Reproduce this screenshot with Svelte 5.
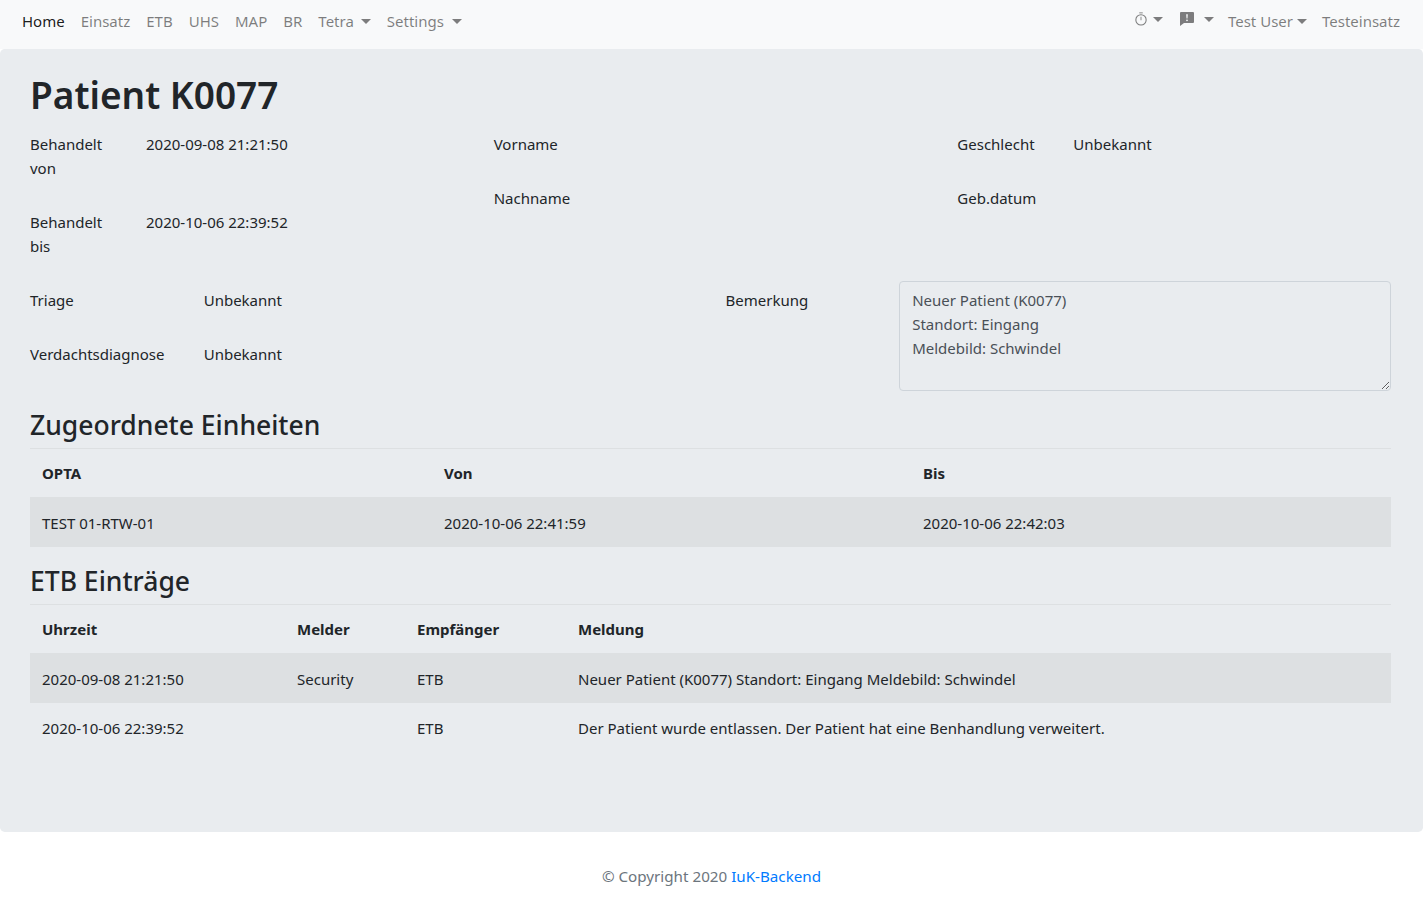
<script>
	const units = [{ opta: 'TEST 01-RTW-01', von: '2020-10-06 22:41:59', bis: '2020-10-06 22:42:03' }];
	const entries = [
		{
			time: '2020-09-08 21:21:50',
			melder: 'Security',
			to: 'ETB',
			text: 'Neuer Patient (K0077) Standort: Eingang Meldebild: Schwindel'
		},
		{
			time: '2020-10-06 22:39:52',
			melder: '',
			to: 'ETB',
			text: 'Der Patient wurde entlassen. Der Patient hat eine Benhandlung verweitert.'
		}
	];
	const links = ['Einsatz', 'ETB', 'UHS', 'MAP', 'BR'];
</script>

<div class="page">
	<nav class="navbar">
		<ul class="nav">
			<li><a class="active" href="#home">Home</a></li>
			{#each links as link}
				<li><a href="#link">{link}</a></li>
			{/each}
			<li><a class="caret tetra" href="#tetra">Tetra</a></li>
			<li><a class="caret" href="#settings">Settings</a></li>
		</ul>
		<ul class="nav">
			<li>
				<a class="caret icon timer" href="#timer" aria-label="Timer">
					<svg viewBox="0 0 16 16" width="14" height="14" fill="currentColor">
						<path d="M6 .5h4v1H6z" />
						<path d="M8 2.5a6.5 6.5 0 1 0 0 13 6.5 6.5 0 0 0 0-13zm0 1.2a5.3 5.3 0 1 1 0 10.6 5.3 5.3 0 0 1 0-10.6z" />
						<path d="M7.5 5.5h1v4h-1z" />
					</svg>
				</a>
			</li>
			<li>
				<a class="caret icon chat" href="#messages" aria-label="Messages">
					<svg viewBox="0 0 16 16" width="16" height="16" fill="currentColor">
						<path d="M2 1h12a1 1 0 0 1 1 1v9a1 1 0 0 1-1 1H5l-4 3V2a1 1 0 0 1 1-1zm5.2 2.2.3 4.3h1l.3-4.3zM8 8.4a.9.9 0 1 0 0 1.8.9.9 0 0 0 0-1.8z" fill-rule="evenodd" />
					</svg>
				</a>
			</li>
			<li class="user"><a class="caret tight" href="#user">Test User</a></li>
			<li><a href="#einsatz">Testeinsatz</a></li>
		</ul>
	</nav>

	<main class="jumbotron">
		<h1>Patient K0077</h1>

		<div class="thirds">
			<div>
				<div class="field">
					<div class="label">Behandelt von</div>
					<div class="value">2020-09-08 21:21:50</div>
				</div>
				<div class="field">
					<div class="label">Behandelt bis</div>
					<div class="value">2020-10-06 22:39:52</div>
				</div>
			</div>
			<div>
				<div class="field">
					<div class="label">Vorname</div>
					<div class="value"></div>
				</div>
				<div class="field">
					<div class="label">Nachname</div>
					<div class="value"></div>
				</div>
			</div>
			<div>
				<div class="field">
					<div class="label">Geschlecht</div>
					<div class="value">Unbekannt</div>
				</div>
				<div class="field">
					<div class="label">Geb.datum</div>
					<div class="value"></div>
				</div>
			</div>
		</div>

		<div class="halves">
			<div>
				<div class="field">
					<div class="label">Triage</div>
					<div class="value">Unbekannt</div>
				</div>
				<div class="field">
					<div class="label">Verdachtsdiagnose</div>
					<div class="value">Unbekannt</div>
				</div>
			</div>
			<div class="field">
				<div class="label">Bemerkung</div>
				<textarea readonly>{'Neuer Patient (K0077)\nStandort: Eingang\nMeldebild: Schwindel'}</textarea>
			</div>
		</div>

		<h3>Zugeordnete Einheiten</h3>
		<hr />
		<table>
			<colgroup>
				<col style="width: 402px" />
				<col style="width: 479px" />
				<col />
			</colgroup>
			<thead>
				<tr><th>OPTA</th><th>Von</th><th>Bis</th></tr>
			</thead>
			<tbody>
				{#each units as u}
					<tr><td>{u.opta}</td><td>{u.von}</td><td>{u.bis}</td></tr>
				{/each}
			</tbody>
		</table>

		<h3 class="etb">ETB Einträge</h3>
		<hr />
		<table>
			<colgroup>
				<col style="width: 255px" />
				<col style="width: 120px" />
				<col style="width: 161px" />
				<col />
			</colgroup>
			<thead>
				<tr><th>Uhrzeit</th><th>Melder</th><th>Empfänger</th><th>Meldung</th></tr>
			</thead>
			<tbody>
				{#each entries as e}
					<tr><td>{e.time}</td><td>{e.melder}</td><td>{e.to}</td><td>{e.text}</td></tr>
				{/each}
			</tbody>
		</table>
	</main>

	<footer>
		<span>© Copyright 2020 <a href="#iuk">IuK-Backend</a></span>
	</footer>
</div>

<style>
	:global(body) {
		margin: 0;
		background: #fff;
		font-family: 'Noto Sans', 'Open Sans', sans-serif;
		font-size: 15px;
		line-height: 24px;
		color: #212529;
	}

	.page {
		width: 1423px;
	}

	.navbar {
		display: flex;
		justify-content: space-between;
		height: 49px;
		box-sizing: border-box;
		padding: 1px 15px 0 14px;
		background: #f8f9fa;
		align-items: flex-start;
	}

	.nav {
		display: flex;
		list-style: none;
		margin: 0;
		padding: 0;
	}

	.nav a {
		display: flex;
		align-items: center;
		padding: 8px;
		color: rgba(0, 0, 0, 0.5);
		text-decoration: none;
	}

	.nav a.active {
		color: rgba(0, 0, 0, 0.9);
	}

	.nav a.icon {
		height: 16px;
		padding: 10px 8px 0;
	}

	.nav a.chat {
		padding-right: 6px;
	}

	.user {
		margin-right: -1px;
	}

	.caret::after {
		content: '';
		margin-left: 8px;
		border-top: 5px solid;
		border-left: 5px solid transparent;
		border-right: 5px solid transparent;
	}

	.caret.tetra::after {
		margin-left: 7px;
	}

	.caret.chat::after {
		margin-left: 9px;
	}

	.caret.tight::after {
		margin-left: 4px;
	}

	.caret.timer::after {
		margin-left: 5px;
	}

	.jumbotron {
		height: 783px;
		box-sizing: border-box;
		padding: 20px 32px 0 30px;
		background: #e9ecef;
		border-radius: 4.8px;
	}

	h1 {
		margin: 0 0 8px;
		padding-top: 2px;
		height: 46px;
		font-size: 37px;
		line-height: 48px;
		font-weight: 600;
	}

	h3 {
		margin: 0 0 5px;
		padding-top: 2px;
		font-size: 26.5px;
		line-height: 33.6px;
		font-weight: 500;
	}

	h3.etb {
		margin-bottom: 6px;
	}

	hr {
		margin: 0;
		border: 0;
		border-top: 1px solid rgba(0, 0, 0, 0.05);
	}

	.thirds {
		display: grid;
		grid-template-columns: repeat(3, 433.67px);
		gap: 30px;
	}

	.halves {
		display: grid;
		grid-template-columns: 665.5px 665.5px;
		gap: 30px;
	}

	.thirds .field {
		grid-template-columns: 86px 1fr;
	}

	.halves .field {
		grid-template-columns: 143.7px 1fr;
	}

	.field {
		display: grid;
		column-gap: 30px;
		margin-bottom: 16px;
		min-height: 38px;
	}

	.label,
	.value {
		padding: 7px 0;
	}

	textarea {
		display: block;
		box-sizing: border-box;
		width: 100%;
		height: 110px;
		padding: 6px 12px;
		background: #e9ecef;
		border: 1px solid #ced4da;
		border-radius: 4px;
		color: #495057;
		font: inherit;
		outline: none;
	}

	table {
		width: 100%;
		table-layout: fixed;
		border-collapse: collapse;
		margin-bottom: 16px;
	}

	th,
	td {
		padding: 12px;
		text-align: left;
		height: 24px;
	}

	th {
		font-weight: 700;
	}

	tbody tr:nth-child(odd) td {
		padding-top: 14px;
		padding-bottom: 12px;
	}

	tbody tr:nth-child(even) td {
		padding-top: 13px;
	}

	tbody tr:nth-child(odd) {
		background: rgba(0, 0, 0, 0.05);
	}

	footer {
		display: flex;
		justify-content: center;
		padding-top: 32px;
		height: 79px;
		box-sizing: border-box;
		font-size: 15.2px;
		color: #6c757d;
	}

	footer a {
		color: #007bff;
		text-decoration: none;
	}
</style>
